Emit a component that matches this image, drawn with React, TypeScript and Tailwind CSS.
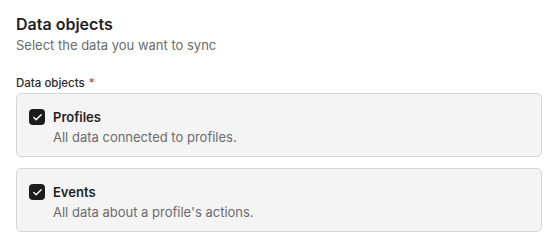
import { Check } from "lucide-react";

const OBJECTS = [
  { name: "Profiles", desc: "All data connected to profiles." },
  { name: "Events", desc: "All data about a profile's actions." },
];

export default function App() {
  return (
    <div className="w-[552px] h-[239px] bg-white px-4 pt-[14px] font-['Inter',sans-serif] text-[#1f1f1f]">
      <h2 className="text-[16px] font-semibold leading-5">Data objects</h2>
      <p className="mt-[3px] text-[13px] leading-4 text-[#6b6b6b]">
        Select the data you want to sync
      </p>

      <div className="mt-[22px] flex items-center gap-1 text-[11.5px] font-medium leading-4 text-[#2a2a2a]">
        Data objects
        <span className="text-[#d8423a]">*</span>
      </div>

      <div className="mt-[2px] flex w-[526px] flex-col gap-[11px]">
        {OBJECTS.map((o) => (
          <label
            key={o.name}
            className="flex h-[64px] flex-col rounded-[5px] border border-[#d6d6d6] bg-[#f4f4f5] pl-3 pt-[13px]"
          >
            <div className="flex items-center gap-2 leading-5">
              <span className="flex h-4 w-4 items-center justify-center rounded-[4px] bg-[#1c1c1c]">
                <Check size={11} strokeWidth={3} className="text-white" />
              </span>
              <span className="text-[13px] font-semibold">{o.name}</span>
            </div>
            <div className="pl-6 text-[13px] leading-5 text-[#6b6b6b]">{o.desc}</div>
          </label>
        ))}
      </div>
    </div>
  );
}
